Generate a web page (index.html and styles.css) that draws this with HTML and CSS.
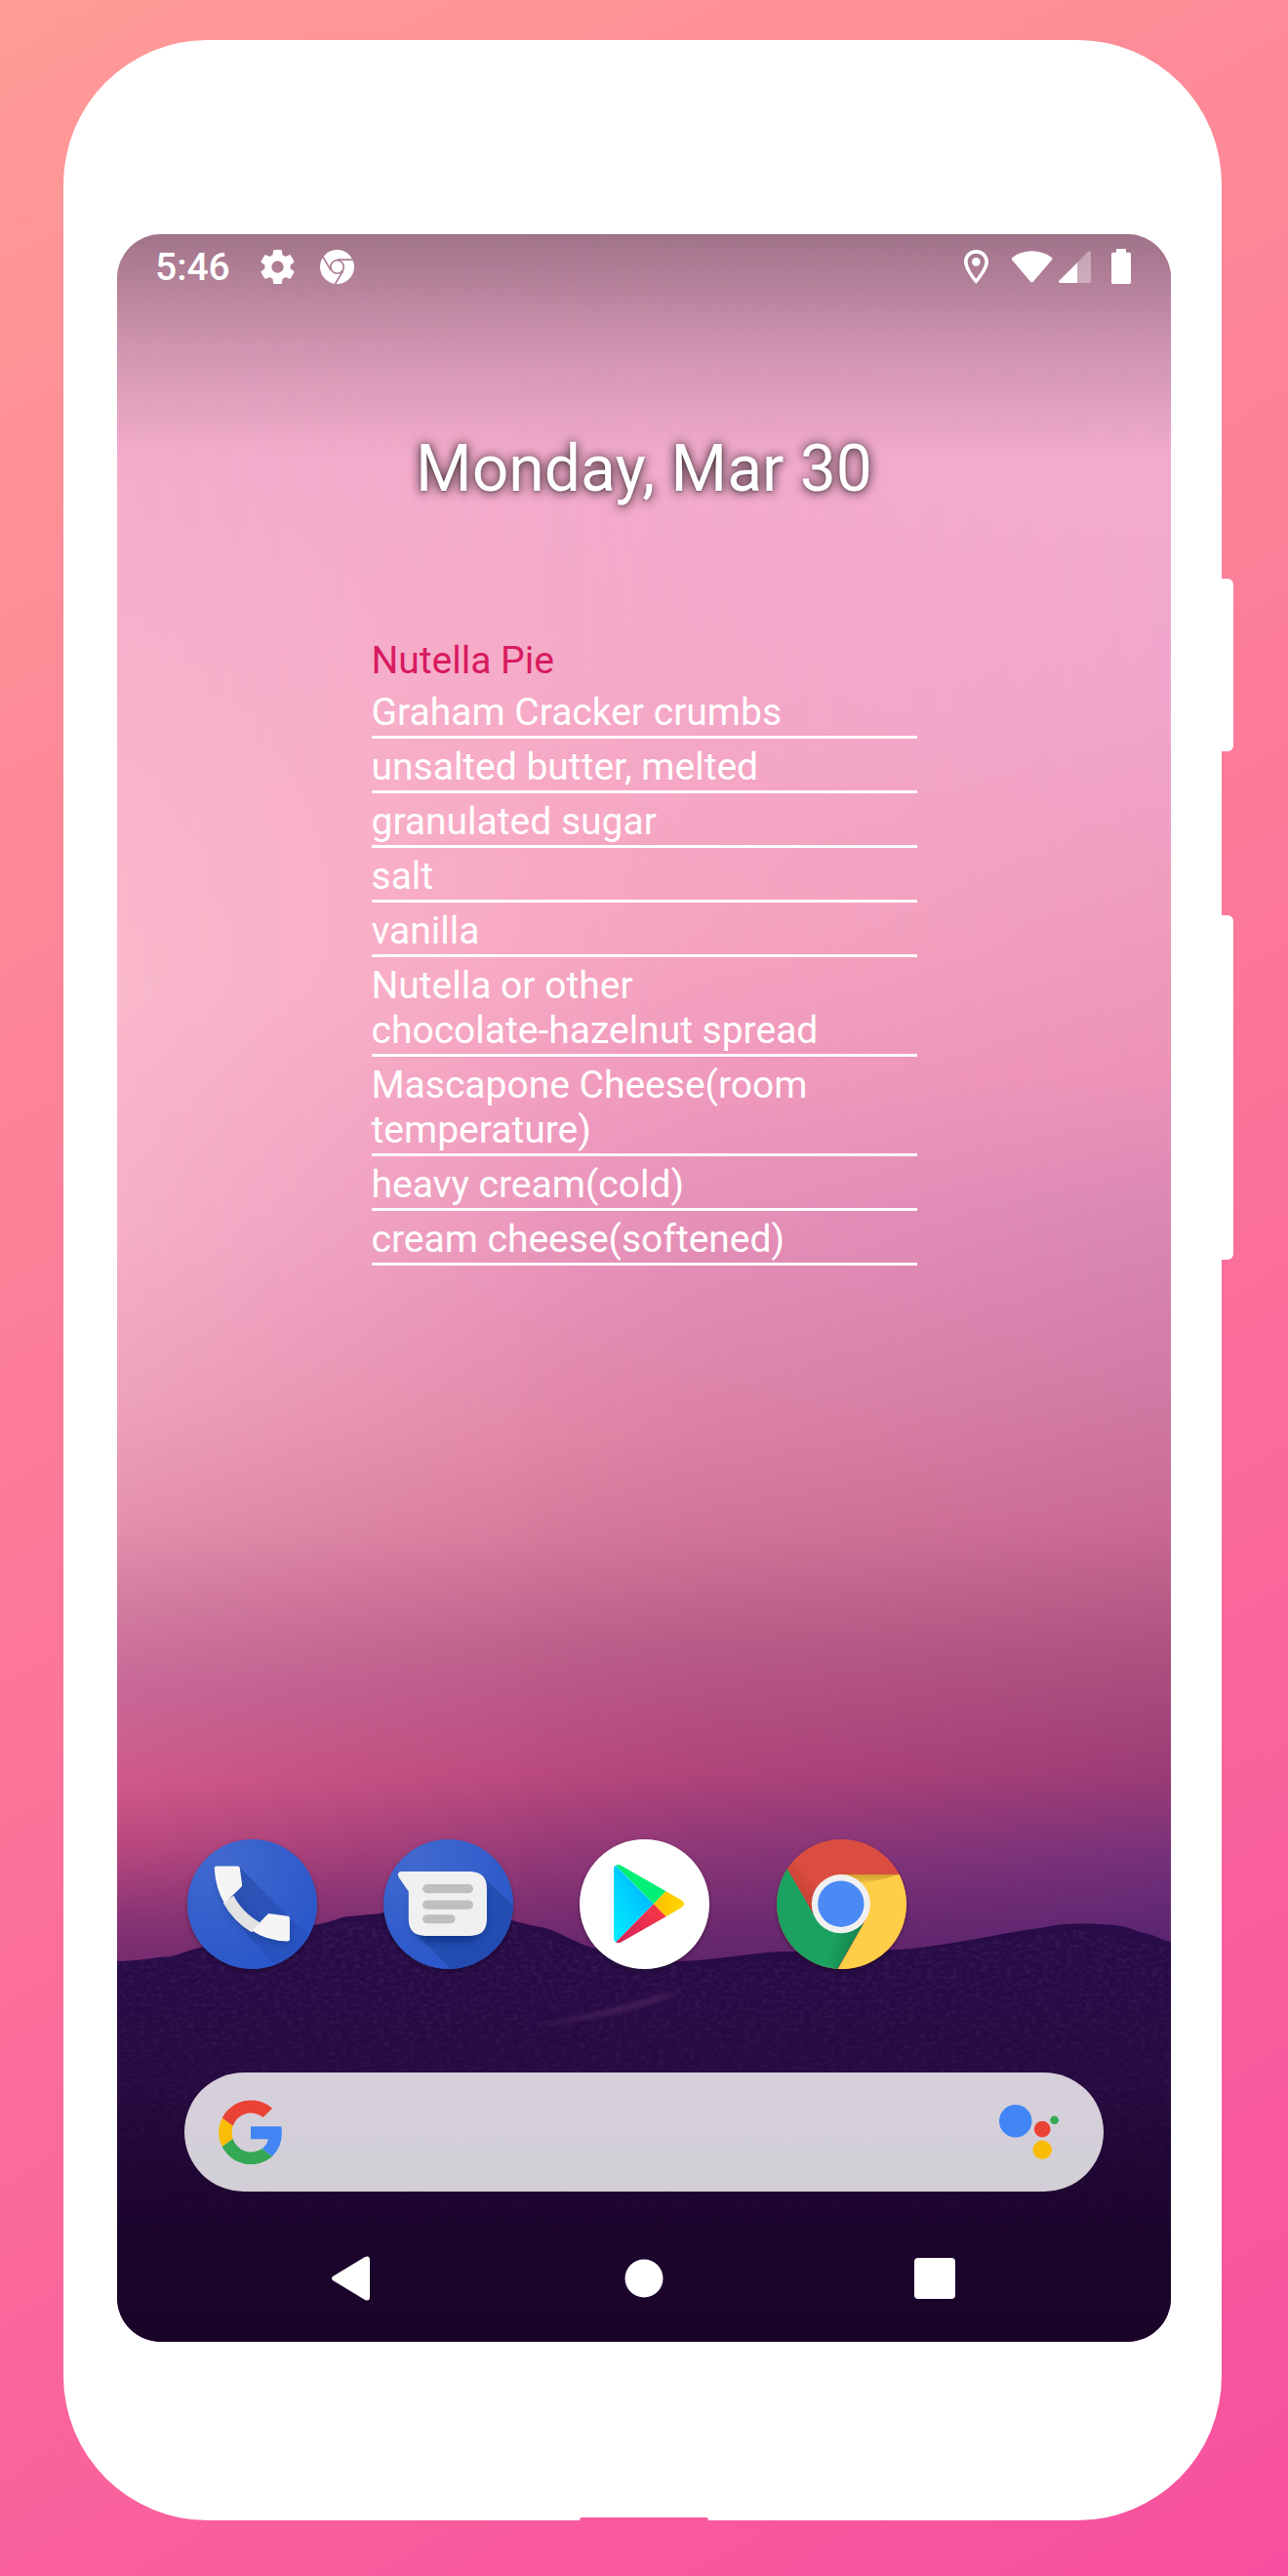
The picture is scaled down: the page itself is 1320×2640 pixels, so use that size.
FILE: index.html
```html
<!DOCTYPE html>
<html lang="en">
<head>
<meta charset="utf-8">
<meta name="viewport" content="width=device-width, initial-scale=1">
<title>Home screen</title>
<link rel="stylesheet" href="styles.css">
</head>
<body>
<div class="phone">
  <span class="side-key side-key-power"></span>
  <span class="side-key side-key-volume"></span>
  <span class="port"></span>
  <main class="screen">
    <svg class="wallpaper" viewBox="120 240 1080 2160" preserveAspectRatio="none" aria-hidden="true">
      <defs>
        <linearGradient id="skyLeft" x1="0" y1="0" x2="0" y2="1">
          <stop offset="0" stop-color="#f0adcc"/><stop offset=".12" stop-color="#f4aecc"/><stop offset=".3" stop-color="#fab7cb"/><stop offset=".36" stop-color="#fab9cc"/><stop offset=".47" stop-color="#f6b0c8"/><stop offset=".55" stop-color="#efa3bd"/><stop offset=".61" stop-color="#e592ae"/><stop offset=".655" stop-color="#d27a9f"/><stop offset=".69" stop-color="#c86897"/><stop offset=".735" stop-color="#d05a89"/><stop offset=".765" stop-color="#b9497f"/><stop offset=".8" stop-color="#883474"/><stop offset=".83" stop-color="#6d286c"/>
        </linearGradient>
        <linearGradient id="skyMid" x1="0" y1="0" x2="0" y2="1">
          <stop offset="0" stop-color="#efaccd"/><stop offset=".12" stop-color="#f3aacb"/><stop offset=".25" stop-color="#f6a9c5"/><stop offset=".34" stop-color="#f7a6c1"/><stop offset=".42" stop-color="#ef9abe"/><stop offset=".5" stop-color="#e68fb7"/><stop offset=".57" stop-color="#e085a5"/><stop offset=".62" stop-color="#d37799"/><stop offset=".67" stop-color="#bb5e8a"/><stop offset=".73" stop-color="#b7487c"/><stop offset=".77" stop-color="#903876"/><stop offset=".8" stop-color="#752c70"/><stop offset=".83" stop-color="#5c246b"/>
        </linearGradient>
        <linearGradient id="skyRight" x1="0" y1="0" x2="0" y2="1">
          <stop offset="0" stop-color="#ecaacb"/><stop offset=".12" stop-color="#f2abce"/><stop offset=".22" stop-color="#f0a5cb"/><stop offset=".32" stop-color="#ef9cbd"/><stop offset=".4" stop-color="#ec92b7"/><stop offset=".46" stop-color="#db88b5"/><stop offset=".54" stop-color="#d07ba6"/><stop offset=".61" stop-color="#c96a94"/><stop offset=".67" stop-color="#ae5280"/><stop offset=".73" stop-color="#9b3c75"/><stop offset=".77" stop-color="#75307a"/><stop offset=".81" stop-color="#5a2570"/>
        </linearGradient>
        <linearGradient id="fadeRight"><stop offset=".38" stop-color="#000"/><stop offset=".7" stop-color="#777"/><stop offset="1" stop-color="#fff"/></linearGradient>
        <linearGradient id="fadeMid"><stop offset="0" stop-color="#000"/><stop offset=".4" stop-color="#ddd"/><stop offset=".55" stop-color="#fff"/></linearGradient>
        <mask id="maskMid"><rect x="120" y="240" width="1080" height="2160" fill="url(#fadeMid)"/></mask>
        <mask id="maskRight"><rect x="120" y="240" width="1080" height="2160" fill="url(#fadeRight)"/></mask>
        <linearGradient id="scrim" x1="0" y1="0" x2="0" y2="1"><stop offset="0" stop-opacity=".33"/><stop offset=".5" stop-opacity=".14"/><stop offset="1" stop-opacity="0"/></linearGradient>
        <linearGradient id="hill" x1="0" y1="0" x2="0" y2="1"><stop offset="0" stop-color="#290c49"/><stop offset=".4" stop-color="#260a40"/><stop offset=".65" stop-color="#1e0630"/><stop offset="1" stop-color="#1a0427"/></linearGradient>
        <linearGradient id="grainFade" x1="0" y1="0" x2="0" y2="1"><stop offset="0" stop-color="#fff"/><stop offset=".8" stop-color="#000"/></linearGradient>
        <mask id="grainMask"><path d="M120 2012L205 2000L358 1970L525 1972L598 2000L698 2014L920 2002L1101 1978L1200 1996V2400H120Z" fill="url(#grainFade)"/></mask>
        <filter id="grain" x="0" y="0" width="1" height="1"><feTurbulence type="fractalNoise" baseFrequency=".16 .28" numOctaves="2" seed="4"/><feColorMatrix values="0 0 0 0 .34  0 0 0 0 .14  0 0 0 0 .42  1.8 0 0 0 -.75"/></filter>
        <filter id="soft"><feGaussianBlur stdDeviation="2"/></filter>
      </defs>
      <rect x="120" y="240" width="1080" height="2160" fill="url(#skyLeft)"/>
      <rect x="120" y="240" width="1080" height="2160" fill="url(#skyMid)" mask="url(#maskMid)"/>
      <rect x="120" y="240" width="1080" height="2160" fill="url(#skyRight)" mask="url(#maskRight)"/>
      <rect x="120" y="240" width="1080" height="230" fill="url(#scrim)"/>
      <path d="M120 2010C140 2010 158 2006 174 2005C186 2003 194 1998 205 1996C250 1990 290 1980 326 1972C340 1970 346 1965 358 1964L379 1962C392 1962 396 1958 410 1956C450 1952 498 1958 525 1968C540 1973 552 1974 563 1977C577 1983 586 1988 598 1993C630 2004 660 2010 698 2010C730 2009 762 2003 797 2000C840 2000 880 2002 920 1998C950 1996 970 1992 995 1988C1020 1984 1044 1978 1066 1976C1090 1970 1120 1971 1143 1973C1158 1975 1162 1978 1172 1981C1184 1983 1192 1989 1200 1990V2400H120Z" fill="url(#hill)"/>
      <g mask="url(#grainMask)"><rect x="120" y="1950" width="1080" height="450" filter="url(#grain)" opacity=".2"/></g>
      <path d="M535 2078Q600 2066 650 2052Q675 2044 700 2040Q670 2056 620 2066Q580 2073 535 2078Z" fill="#49205c" opacity=".8" filter="url(#soft)"/>
    </svg>

    <header class="status">
      <time class="clock">5:46</time>
      <svg class="status-icon gear" viewBox="2 2 20 20" aria-hidden="true"><path fill="#fff" d="M19.43 12.98c.04-.32.07-.64.07-.98s-.03-.66-.07-.98l2.11-1.65c.19-.15.24-.42.12-.64l-2-3.46c-.12-.22-.39-.3-.61-.22l-2.49 1c-.52-.4-1.08-.73-1.69-.98l-.38-2.65C14.46 2.18 14.25 2 14 2h-4c-.25 0-.46.18-.49.42l-.38 2.65c-.61.25-1.17.59-1.69.98l-2.49-1c-.23-.09-.49 0-.61.22l-2 3.46c-.13.22-.07.49.12.64l2.11 1.65c-.04.32-.07.65-.07.98s.03.66.07.98l-2.11 1.65c-.19.15-.24.42-.12.64l2 3.46c.12.22.39.3.61.22l2.49-1c.52.4 1.08.73 1.69.98l.38 2.65c.03.24.24.42.49.42h4c.25 0 .46-.18.49-.42l.38-2.65c.61-.25 1.17-.59 1.69-.98l2.49 1c.23.09.49 0 .61-.22l2-3.46c.12-.22.07-.49-.12-.64l-2.11-1.65zM12 15.5c-1.93 0-3.5-1.57-3.5-3.5s1.57-3.5 3.5-3.5 3.5 1.57 3.5 3.5-1.57 3.5-3.5 3.5z"/></svg>
      <svg class="status-icon" viewBox="654 78 104 104" aria-hidden="true"><circle cx="706" cy="130" r="52" fill="#fff"/><g fill="none" stroke="#ad7c94" stroke-width="5"><circle cx="706" cy="130" r="20"/><path d="M706 108H756M687 141L662 98M725 141L700 182"/></g></svg>
      <span class="status-gap"></span>
      <svg class="pin" viewBox="84 75 75 105" aria-hidden="true"><path fill="#fff" fill-rule="evenodd" d="M121 75C100 75 84 91 84 112C84 138 121 180 121 180S159 138 159 112C159 91 142 75 121 75ZM121 86C136 86 148 97 148 112C148 128 131 152 121 164C111 152 95 128 95 112C95 97 106 86 121 86Z"/><circle cx="121" cy="112" r="13" fill="#fff"/></svg>
      <svg class="wifi" viewBox="229 76 128 100" aria-hidden="true"><path fill="#fff" d="M232 97Q258 77 293 77T355 97Q358 100 355 104L297 172Q293 176 289 172L231 104Q229 100 232 97Z"/></svg>
      <svg class="signal" viewBox="374 80 100 100" aria-hidden="true"><path fill="#fff" fill-opacity=".35" d="M432 116L466 82Q474 78 474 86V175Q474 180 469 180H432Z"/><path fill="#fff" d="M432 116V180H378Q372 178 375 173Z"/></svg>
      <svg class="battery" viewBox="537 75 60 108" aria-hidden="true"><path fill="#fff" d="M552 75H582V86H592Q597 86 597 91V178Q597 183 592 183H542Q537 183 537 178V91Q537 86 542 86H552Z"/></svg>
    </header>

    <h1 class="date">Monday, Mar 30</h1>

    <section class="recipe">
      <h2 class="recipe-title">Nutella Pie</h2>
      <ul class="ingredients">
        <li>Graham Cracker crumbs</li>
        <li>unsalted butter, melted</li>
        <li>granulated sugar</li>
        <li>salt</li>
        <li>vanilla</li>
        <li>Nutella or other <br>chocolate-hazelnut spread</li>
        <li>Mascapone Cheese(room temperature)</li>
        <li>heavy cream(cold)</li>
        <li>cream cheese(softened)</li>
      </ul>
    </section>

    <nav class="dock" aria-label="Favorite apps">
      <button class="app" aria-label="Phone">
        <svg viewBox="246 75 398 398"><defs><radialGradient id="blue" cx=".25" cy=".15" r=".9"><stop offset="0" stop-color="#4169cf"/><stop offset="1" stop-color="#2a57c9"/></radialGradient><clipPath id="pc"><circle cx="445" cy="274" r="199"/></clipPath><linearGradient id="longShade" x1="0" y1="0" x2="1" y2="1"><stop offset="0" stop-color="#10307f" stop-opacity=".4"/><stop offset=".8" stop-color="#10307f" stop-opacity=".1"/></linearGradient><filter id="cast" x="-.3" y="-.3" width="1.6" height="1.7"><feGaussianBlur stdDeviation="10"/></filter></defs><circle cx="445" cy="274" r="199" fill="url(#blue)"/><g clip-path="url(#pc)"><path d="M405 160L640 395L560 510L440 380L360 275L412 215Z" fill="url(#longShade)"/><path d="M334 175Q350 380 556 398V330L470 345L395 265Z" fill="#143a91" opacity=".5" filter="url(#cast)"/></g><path fill="#e2e2e2" d="M356 270L388 248Q415 300 468 330L444 360Q390 330 356 270Z"/><path fill="#f5f5f5" d="M336 157H400Q406 157 407 163L414 214Q414 219 411 222L360 272Q332 225 329 164Q329 157 336 157ZM444 355L491 306Q495 302 500 303L555 311Q560 312 560 318V382Q560 388 553 388Q488 386 444 355Z"/></svg>
      </button>
      <button class="app" aria-label="Messages">
        <svg viewBox="850 75 398 398"><defs><clipPath id="mc"><circle cx="1049" cy="274" r="199"/></clipPath></defs><circle cx="1049" cy="274" r="199" fill="url(#blue)"/><g clip-path="url(#mc)"><path d="M1155 190L1260 290V480H1065L940 355Z" fill="#1c449c" opacity=".55"/><path d="M935 240H1165V350L1120 392H975L935 350Z" fill="#102f7c" opacity=".6" filter="url(#cast)"/></g><path fill="#f0f0f0" d="M902 174H1116Q1167 176 1167 225V320Q1167 371 1116 371H978Q927 371 927 320V235L896 190Q891 178 902 174Z"/><g fill="#bfbfbf"><rect x="970" y="213" width="155" height="27" rx="13.5"/><rect x="970" y="262" width="155" height="28" rx="14"/><rect x="970" y="306" width="100" height="27" rx="13.5"/></g></svg>
      </button>
      <button class="app" aria-label="Play Store">
        <svg viewBox="72 75 398 398"><defs><linearGradient id="pb" x1="1" y1="0" x2="0" y2="1"><stop offset="0" stop-color="#00aaff"/><stop offset="1" stop-color="#00f0ff"/></linearGradient><linearGradient id="py"><stop offset="0" stop-color="#ffbd00"/><stop offset="1" stop-color="#ffd800"/></linearGradient><linearGradient id="pr" x1="1" y1="0" x2="0" y2="1"><stop offset="0" stop-color="#ff3a44"/><stop offset="1" stop-color="#d0225a"/></linearGradient></defs><circle cx="271" cy="274" r="199" fill="#fff"/><path fill="url(#pb)" d="M183 155L299 273L183 391Q177 388 177 380V165Q177 158 183 155Z"/><path fill="#00f076" d="M183 155Q190 150 200 156L337 234L299 273Z"/><path fill="url(#py)" d="M337 234L385 262Q400 273 385 284L337 312L299 273Z"/><path fill="url(#pr)" d="M299 273L337 312L200 390Q190 396 183 391Z"/></svg>
      </button>
      <button class="app" aria-label="Chrome">
        <svg viewBox="676 75 398 398"><defs><clipPath id="cc"><circle cx="875" cy="274" r="199"/></clipPath><linearGradient id="redShade" x1="0" y1="1" x2=".7" y2=".3"><stop offset="0" stop-color="#a53023" stop-opacity=".75"/><stop offset=".7" stop-color="#a53023" stop-opacity="0"/></linearGradient><linearGradient id="yellowShade" x1="0" y1="0" x2="0" y2="1"><stop offset="0" stop-color="#a8741c" stop-opacity=".55"/><stop offset="1" stop-color="#a8741c" stop-opacity="0"/></linearGradient><linearGradient id="greenShade" x1="1" y1=".5" x2="0" y2=".3"><stop offset="0" stop-color="#07552d" stop-opacity=".5"/><stop offset=".6" stop-color="#07552d" stop-opacity="0"/></linearGradient></defs><g clip-path="url(#cc)"><rect x="676" y="75" width="398" height="398" fill="#db4d40"/><path fill="url(#redShade)" d="M708 165L780 90L875 184L785 300Z"/><path fill="#ffce48" d="M875 183H1080V480H860L950 320Z"/><path fill="url(#yellowShade)" d="M875 183H1052L935 215Z"/><path fill="#1ba261" d="M708 165L797 318L875 362L942 333L862 473H670V165Z"/><path fill="url(#greenShade)" d="M942 333L862 473H780L860 360Z"/></g><circle cx="873" cy="273" r="90" fill="#f0f0f1"/><circle cx="873" cy="273" r="71" fill="#4b8af5"/></svg>
      </button>
    </nav>

    <form class="search" role="search">
      <svg class="google" viewBox="132 125 195 198" aria-hidden="true"><path fill="#ea4335" d="M143 181A99 99 0 0 1 297 151L269 179A59 59 0 0 0 176 205Z"/><path fill="#fbbc05" d="M143 181L176 205Q170 225 176 245L143 269Q121 225 143 181Z"/><path fill="#34a853" d="M143 269L176 245A59 59 0 0 0 266 275L297 299A99 99 0 0 1 143 269Z"/><path fill="#4285f4" d="M231 207H325Q333 265 297 299L266 275Q281 264 285 246H231Z"/></svg>
      <input class="search-input" type="search" aria-label="Search">
      <button class="assistant" type="button" aria-label="Assistant"><svg viewBox="131 141 182 167"><circle cx="181" cy="191" r="50" fill="#4285f4"/><circle cx="263" cy="216" r="25" fill="#ea4335"/><circle cx="300" cy="188" r="13" fill="#34a853"/><circle cx="263" cy="279" r="29" fill="#fbbc05"/></svg></button>
    </form>

    <nav class="system-nav" aria-label="System">
      <button aria-label="Back"><svg viewBox="0 0 46 46"><path fill="#fff" d="M2 21L35 1Q40 -1 40 4V42Q40 47 35 45L2 25Q0 23 2 21Z"/></svg></button>
      <button aria-label="Home"><svg viewBox="0 0 46 46"><circle cx="23" cy="23" r="19.5" fill="#fff"/></svg></button>
      <button aria-label="Recent apps"><svg viewBox="0 0 46 46"><rect x="2" y="2" width="42" height="42" rx="4" fill="#fff"/></svg></button>
    </nav>
  </main>
</div>
</body>
</html>
```
FILE: styles.css
```css
* { box-sizing: border-box; }

body {
  margin: 0;
  min-height: 100vh;
  padding: 41px 68px 57px 65px;
  background: linear-gradient(150deg, #ff9b96 0%, #fc7799 50%, #f74f9f 100%);
  font-family: Roboto, "Liberation Sans", sans-serif;
  color: #fff;
}

button {
  padding: 0;
  border: 0;
  background: none;
}

svg { display: block; }

.phone {
  position: relative;
  padding: 199px 52px 183px 55px;
  border-radius: 148px;
  background: #fff;
}

.side-key {
  position: absolute;
  right: -12px;
  width: 24px;
  border-radius: 6px;
  background: #fff;
}

.side-key-power { top: 552px; height: 177px; }
.side-key-volume { top: 897px; height: 353px; }

.port {
  position: absolute;
  bottom: 0;
  left: calc(50% - 65px);
  width: 132px;
  height: 3px;
  border-radius: 8px 8px 0 0;
  background: #f9599f;
}

.screen {
  position: relative;
  isolation: isolate;
  overflow: hidden;
  border-radius: 45px;
}

.wallpaper {
  position: absolute;
  inset: 0;
  z-index: -1;
  width: 100%;
  height: 100%;
}

.status {
  display: flex;
  align-items: center;
  height: 66px;
  padding: 0 41px 0 39px;
}

.clock {
  padding-top: 2px;
  font-size: 39px;
  font-weight: 500;
  line-height: 46px;
  margin-right: 31px;
}

.status-icon {
  width: 35px;
  height: 35px;
  margin-right: 26px;
}

.status-gap { flex: 1; }

.pin { width: 25px; height: 35px; margin-right: 23px; }
.wifi { width: 43px; height: 33px; margin-right: 6px; }
.signal { width: 33px; height: 33px; margin-right: 21px; }
.battery { width: 20px; height: 36px; }

.date {
  margin: 136px 0 0;
  font-size: 66px;
  font-weight: 400;
  line-height: 78px;
  text-align: center;
  text-shadow: 0 1px 12px rgba(0, 0, 0, .9), 0 1px 3px rgba(0, 0, 0, .3);
}

.recipe {
  width: 52%;
  max-width: 559px;
  margin: 134px auto 0;
  font-size: 39px;
  line-height: 46px;
}

.recipe-title {
  margin: 0 0 1px;
  font-size: inherit;
  font-weight: 400;
  color: #d81b60;
}

.ingredients {
  margin: 0;
  padding: 0;
  list-style: none;
}

.ingredients li {
  padding: 6px 0 1px;
  border-bottom: 3px solid #fff;
}

.dock {
  display: grid;
  grid-template-columns: repeat(5, 1fr);
  justify-items: center;
  margin-top: 588px;
  padding: 0 36px 0 38px;
}

.app {
  width: 133px;
  height: 133px;
  border-radius: 50%;
  box-shadow: 0 2px 4px rgba(0, 0, 0, .35);
}

.search {
  display: flex;
  align-items: center;
  height: 122px;
  margin: 106px 69px 0;
  padding: 0 46px 0 35px;
  border-radius: 61px;
  background: linear-gradient(#d6d0dc, #d2cfd6);
}

.google { width: 65px; height: 66px; }

.search-input {
  flex: 1;
  min-width: 0;
  height: 66px;
  border: 0;
  background: none;
  font: inherit;
  font-size: 39px;
}

.assistant { width: 61px; height: 56px; }

.system-nav {
  display: grid;
  grid-template-columns: repeat(3, 1fr);
  place-items: center;
  height: 130px;
  margin-top: 24px;
  padding: 0 93px;
}

.system-nav button { width: 46px; height: 46px; }
```
